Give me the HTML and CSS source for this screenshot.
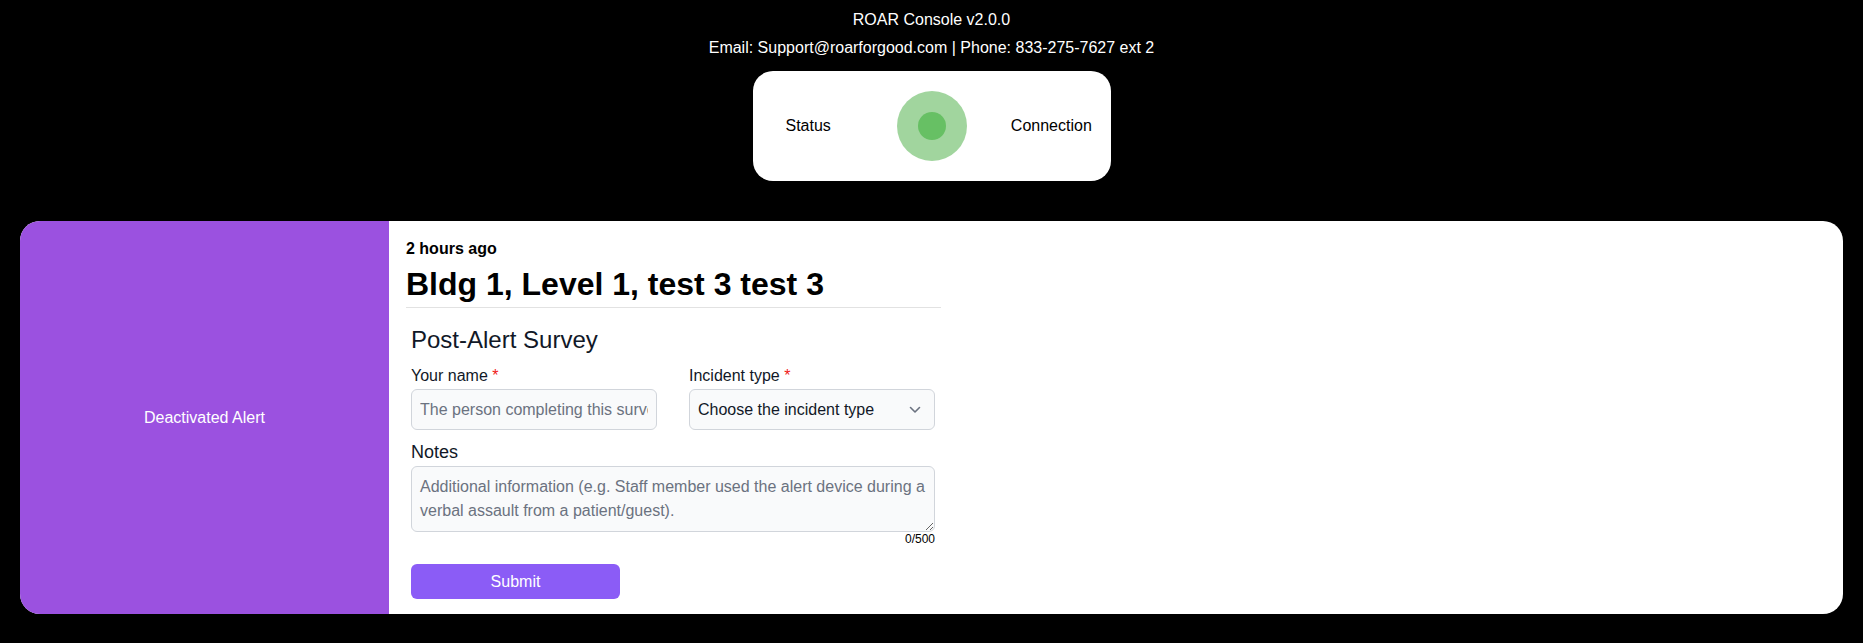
FILE: index.html
```html
<!DOCTYPE html>
<html lang="en">
<head>
<meta charset="utf-8">
<title>ROAR Console</title>
<link rel="stylesheet" href="styles.css">
</head>
<body>
  <header class="top">
    <div class="top-line">ROAR Console v2.0.0</div>
    <div class="top-line">Email: Support@roarforgood.com | Phone: 833-275-7627 ext 2</div>
  </header>

  <section class="status-box">
    <span class="status-label">Status</span>
    <span class="indicator"><span class="indicator-dot"></span></span>
    <span class="status-conn">Connection</span>
  </section>

  <main class="card">
    <div class="card-side">Deactivated Alert</div>
    <div class="card-body">
      <div class="time">2 hours ago</div>
      <h1 class="location">Bldg 1, Level 1, test 3 test 3</h1>
      <form class="survey">
        <h2 class="survey-title">Post-Alert Survey</h2>
        <div class="row">
          <div class="field">
            <label class="label">Your name <span class="req">*</span></label>
            <input class="control" type="text" placeholder="The person completing this survey">
          </div>
          <div class="field">
            <label class="label">Incident type <span class="req">*</span></label>
            <div class="select-wrap">
              <select class="control select">
                <option>Choose the incident type</option>
              </select>
              <svg class="chevron" width="12" height="8" viewBox="0 0 12 8"><path d="M1.5 1.5 L6 6 L10.5 1.5" fill="none" stroke="#6b7280" stroke-width="1.6" stroke-linecap="round" stroke-linejoin="round"/></svg>
            </div>
          </div>
        </div>
        <label class="label notes-label">Notes</label>
        <textarea class="notes" rows="2" placeholder="Additional information (e.g. Staff member used the alert device during a verbal assault from a patient/guest)."></textarea>
        <div class="counter">0/500</div>
        <button class="submit" type="button">Submit</button>
      </form>
    </div>
  </main>
</body>
</html>
```

FILE: styles.css
```css
* { box-sizing: border-box; }

html, body {
  margin: 0;
  padding: 0;
  background: #000;
  font-family: "Liberation Sans", Arial, sans-serif;
  font-size: 16px;
}

.top {
  padding-top: 6px;
  text-align: center;
  color: #fff;
}

.top-line {
  line-height: 28px;
}

.status-box {
  width: 358px;
  height: 110px;
  margin: 9px auto 0;
  background: #fff;
  border-radius: 20px;
  display: flex;
  align-items: center;
  padding: 0 0 0 33px;
  color: #000;
}

.status-label { margin-right: 66px; }

.indicator {
  width: 70px;
  height: 70px;
  border-radius: 50%;
  background: #a1d59e;
  display: flex;
  align-items: center;
  justify-content: center;
  margin-right: 44px;
}

.indicator-dot {
  width: 28px;
  height: 28px;
  border-radius: 50%;
  background: #67c064;
}

.card {
  margin: 40px 20px 0;
  height: 393px;
  background: #fff;
  border-radius: 20px;
  overflow: hidden;
  display: flex;
}

.card-side {
  flex: 0 0 369px;
  background: #9b51e0;
  color: #fff;
  display: flex;
  align-items: center;
  justify-content: center;
}

.card-body {
  width: 552px;
  padding: 18px 0 15px 17px;
  color: #000;
}

.time {
  font-weight: bold;
  line-height: 20px;
}

.location {
  margin: 5px 0 0;
  font-size: 32px;
  line-height: 40px;
  font-weight: bold;
  padding-bottom: 3px;
  border-bottom: 1px solid #e2e2e2;
}

.survey {
  width: 524px;
  margin-left: 5px;
}

.survey-title {
  margin: 17px 0 0;
  font-size: 24px;
  line-height: 30px;
  font-weight: normal;
  color: #111827;
}

.row {
  display: grid;
  grid-template-columns: 1fr 1fr;
  column-gap: 32px;
  margin-top: 11px;
}

.label {
  display: block;
  line-height: 20px;
  color: #111827;
}

.req { color: #f01818; }

.control {
  display: block;
  width: 100%;
  height: 41px;
  margin-top: 3px;
  padding: 0 8px;
  border: 1px solid #d1d5db;
  border-radius: 6px;
  background: #f9fafb;
  font-family: inherit;
  font-size: 16px;
  color: #111827;
  outline: none;
}

.control::placeholder { color: #6b7280; }

.select-wrap { position: relative; }

.select {
  appearance: none;
  -webkit-appearance: none;
}

.chevron {
  position: absolute;
  right: 14px;
  top: 17px;
  pointer-events: none;
}

.notes-label {
  margin-top: 11px;
  font-size: 18px;
  line-height: 22px;
}

.notes {
  display: block;
  width: 100%;
  height: 66px;
  margin-top: 3px;
  padding: 8px 4px 8px 8px;
  border: 1px solid #d1d5db;
  border-radius: 6px;
  background: #f9fafb;
  font-family: inherit;
  font-size: 16px;
  line-height: 24px;
  color: #111827;
  outline: none;
}

.notes::placeholder { color: #6b7280; }

.counter {
  text-align: right;
  font-size: 12px;
  line-height: 14px;
  color: #000;
}

.submit {
  display: block;
  margin-top: 18px;
  width: 209px;
  height: 35px;
  border: 0;
  border-radius: 6px;
  background: #8b5cf6;
  color: #fff;
  font-family: inherit;
  font-size: 16px;
}
```
